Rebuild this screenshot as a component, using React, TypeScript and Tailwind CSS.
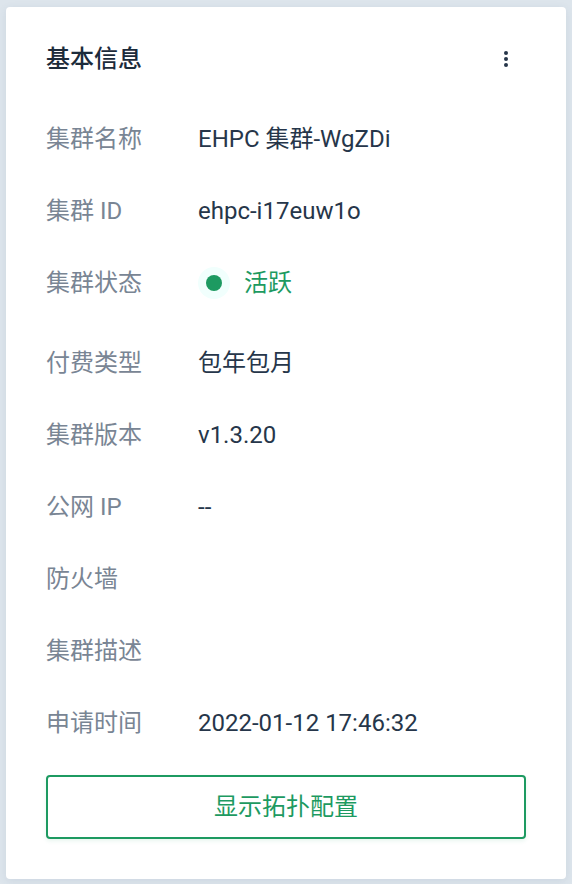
import type { ReactNode } from 'react';

type Item = { label: string; value?: ReactNode; tall?: boolean };

const items: Item[] = [
  { label: '集群名称', value: 'EHPC 集群-WgZDi' },
  { label: '集群 ID', value: 'ehpc-i17euw1o' },
  {
    label: '集群状态',
    tall: true,
    value: (
      <span className="flex items-center gap-3.5 text-[#1d9a61]">
        <span className="flex size-8 items-center justify-center rounded-full bg-[#f1fffd]">
          <span className="size-4 rounded-full bg-[#1d9a61]" />
        </span>
        活跃
      </span>
    ),
  },
  { label: '付费类型', value: '包年包月' },
  { label: '集群版本', value: 'v1.3.20' },
  { label: '公网 IP', value: '--' },
  { label: '防火墙' },
  { label: '集群描述' },
  { label: '申请时间', value: '2022-01-12 17:46:32' },
];

export default function App() {
  return (
    <main className="min-h-screen bg-[#dde5ec] px-[6px] pt-[7px] pb-[5px] font-[Roboto,'Noto_Sans_CJK_SC',sans-serif] text-2xl leading-10 text-[#26364a]">
      <section className="rounded-[4px] bg-white px-10 pt-8 pb-10 shadow-[0_2px_8px_rgba(54,84,130,0.1)]">
        <header className="flex items-center justify-between">
          <h2 className="font-medium text-[#1c2b3b]">基本信息</h2>
          <button type="button" aria-label="更多操作" className="flex size-10 items-center justify-center">
            <svg viewBox="0 0 24 24" className="size-6" fill="currentColor" aria-hidden="true">
              <circle cx="12" cy="6" r="2" />
              <circle cx="12" cy="12" r="2" />
              <circle cx="12" cy="18" r="2" />
            </svg>
          </button>
        </header>
        <dl className="mt-10 flex flex-col gap-8">
          {items.map(({ label, value, tall }) => (
            <div key={label} className={tall ? 'flex pb-2' : 'flex'}>
              <dt className="w-[152px] shrink-0 text-[#798594]">{label}</dt>
              <dd className="flex items-center">{value}</dd>
            </div>
          ))}
        </dl>
        <button
          type="button"
          className="mt-8 h-16 w-full rounded-[4px] border-2 border-[#1d9a61] bg-white text-[#1d9a61] shadow-[0_2px_4px_rgba(29,154,97,0.1)]"
        >
          显示拓扑配置
        </button>
      </section>
    </main>
  );
}
